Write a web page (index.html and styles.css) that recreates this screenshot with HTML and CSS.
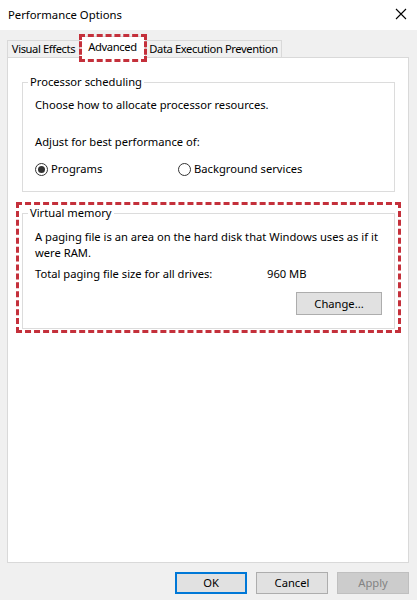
FILE: index.html
```html
<!DOCTYPE html>
<html>
<head>
<meta charset="utf-8">
<title>Performance Options</title>
<link rel="stylesheet" href="styles.css">
</head>
<body>
<div class="window">
  <div class="titlebar">
    <span class="title">Performance Options</span>
    <svg class="close" width="12" height="12" viewBox="0 0 12 12"><path d="M1 1L11 11M11 1L1 11" stroke="#000" stroke-width="1.1" fill="none"/></svg>
  </div>
  <div class="body">
    <div class="tabs">
      <div class="tab tab-ve">Visual Effects</div>
      <div class="tab tab-adv selected">Advanced</div>
      <div class="tab tab-dep">Data Execution Prevention</div>
    </div>
    <div class="panel">
      <fieldset class="group group-proc">
        <legend>Processor scheduling</legend>
        <div class="group-body">
          <p class="line l-choose">Choose how to allocate processor resources.</p>
          <p class="line l-adjust">Adjust for best performance of:</p>
          <div class="radios">
            <label class="radio r-programs"><span class="dot checked"></span>Programs</label>
            <label class="radio"><span class="dot"></span>Background services</label>
          </div>
        </div>
      </fieldset>
      <div class="highlight">
        <fieldset class="group group-vm">
          <legend>Virtual memory</legend>
          <div class="group-body">
            <p class="line l-desc">A paging file is an area on the hard disk that Windows uses as if it<br>were RAM.</p>
            <p class="line l-total"><span class="total-label">Total paging file size for all drives:</span><span>960 MB</span></p>
            <div class="change-row"><button class="btn btn-change">Change...</button></div>
          </div>
        </fieldset>
      </div>
    </div>
    <div class="footer">
      <button class="btn btn-ok">OK</button>
      <button class="btn">Cancel</button>
      <button class="btn btn-disabled">Apply</button>
    </div>
  </div>
</div>
</body>
</html>
```
FILE: styles.css
```css
html, body {
  margin: 0;
  padding: 0;
}
body {
  width: 417px;
  height: 600px;
  overflow: hidden;
  font-family: "Noto Sans", "Open Sans", sans-serif;
  font-size: 11.2px;
  line-height: 16px;
  color: #000;
  background: #f0f0f0;
}
.window {
  width: 417px;
  height: 600px;
  display: flex;
  flex-direction: column;
}
.titlebar {
  height: 30px;
  background: #fff;
  display: flex;
  align-items: center;
  justify-content: space-between;
  padding: 0 10px 0 8px;
  box-sizing: border-box;
  font-size: 11.3px;
}
.title {
  margin-top: -1px;
}
.close {
  display: block;
  margin-top: -2px;
}
.body {
  flex: 1;
  background: #f0f0f0;
  padding: 6px 8px 0 7px;
  display: flex;
  flex-direction: column;
}
.tabs {
  display: flex;
  align-items: flex-end;
  height: 21px;
}
.tab {
  box-sizing: border-box;
  height: 17px;
  line-height: 15px;
  border: 1px solid #d9d9d9;
  border-bottom: none;
  background: #f0f0f0;
  text-align: center;
  white-space: nowrap;
  letter-spacing: -0.4px;
}
.tab-ve {
  width: 72px;
  border-right: none;
}
.tab-adv {
  width: 67px;
}
.tab-dep {
  width: 136px;
  border-left: none;
}
.tab.selected {
  position: relative;
  z-index: 1;
  height: 22px;
  margin-bottom: -1px;
  background: #fff;
  line-height: 19px;
}
.tab.selected::after {
  content: "";
  position: absolute;
  top: -3px;
  bottom: -4px;
  left: -1px;
  right: -2px;
  border: 3px dashed #c4303b;
}
.panel {
  box-sizing: border-box;
  height: 506px;
  background: #fff;
  border: 1px solid #d9d9d9;
  padding: 16px 13px 0 14px;
}
.group {
  margin: 0;
  padding: 0 4px 0 5px;
  border: 1px solid #dcdcdc;
  min-width: 0;
}
.group legend {
  padding: 0 2px;
  line-height: 16px;
}
.group-body {
  padding-left: 7px;
}
.line {
  margin: 0;
  white-space: nowrap;
}
.l-choose {
  margin-top: 7px;
}
.l-adjust {
  margin-top: 21px;
}
.radios {
  display: flex;
  margin-top: 11px;
  padding-bottom: 14px;
}
.radio {
  display: flex;
  align-items: center;
}
.r-programs {
  width: 143px;
}
.dot {
  box-sizing: border-box;
  width: 13px;
  height: 13px;
  border: 1px solid #333;
  border-radius: 50%;
  margin-right: 3px;
  position: relative;
}
.dot.checked::after {
  content: "";
  position: absolute;
  left: 2px;
  top: 2px;
  width: 7px;
  height: 7px;
  border-radius: 50%;
  background: #333;
}
.highlight {
  margin-top: 10px;
  margin-left: -6px;
  margin-right: -6px;
  border: 3px dashed #c4303b;
  padding: 0 3px 1px 3px;
}
.l-desc {
  margin-top: 8px;
}
.l-total {
  margin-top: 5px;
  display: flex;
}
.total-label {
  width: 232px;
}
.change-row {
  display: flex;
  justify-content: flex-end;
  margin-top: 10px;
  padding-bottom: 13px;
  padding-right: 8px;
}
.btn {
  box-sizing: border-box;
  font-family: inherit;
  font-size: 11.2px;
  color: #000;
  background: #e1e1e1;
  border: 1px solid #adadad;
  border-radius: 0;
  padding: 0;
  margin: 0;
  height: 22px;
  width: 72px;
  line-height: 18px;
}
.btn-change {
  width: 86px;
  height: 23px;
}
.footer {
  display: flex;
  justify-content: flex-end;
  gap: 9px;
  margin-top: 9px;
}
.btn-ok {
  border: 2px solid #0078d7;
}
.btn-disabled {
  background: #cccccc;
  border-color: #bfbfbf;
  color: #838383;
}
```
